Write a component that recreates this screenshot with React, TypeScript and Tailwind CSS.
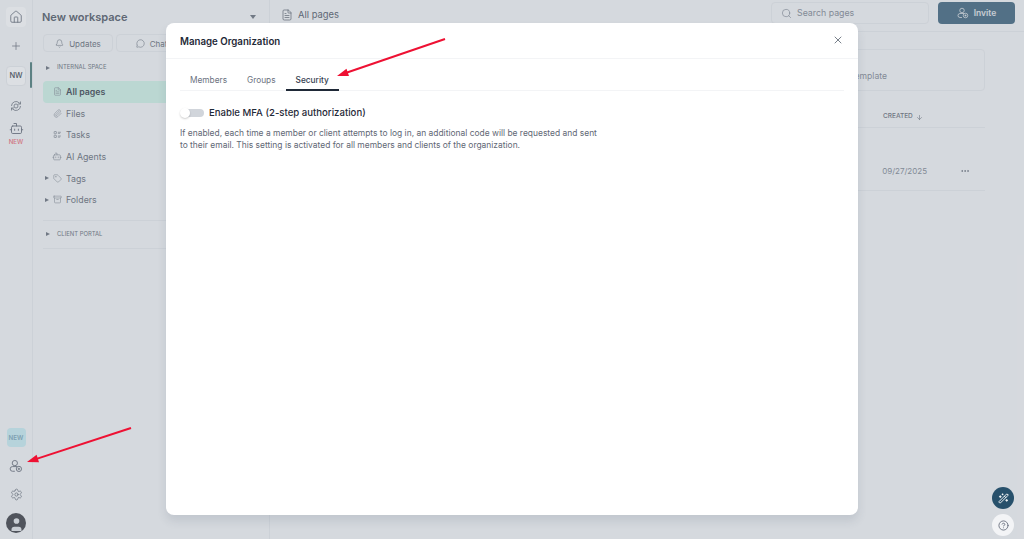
import { Bell, FileText, Home, MessageCircle, MoreHorizontal, Paperclip, Plus, Search, Tag, Archive, X, Bot, ArrowDown, Wand2, CircleHelp, User, Settings } from 'lucide-react';

function UsersPlusIcon({ className }: { className?: string }) {
  return (
    <svg viewBox="0 0 24 24" fill="none" stroke="currentColor" strokeWidth="1.6" className={className} aria-hidden>
      <circle cx="10" cy="7" r="4.5" />
      <path d="M10 21H6a3.5 3.5 0 0 1 0-8h8" />
      <circle cx="17" cy="17" r="4.5" />
      <path d="M17 15v4M15 17h4" />
    </svg>
  );
}

function SyncIcon({ className }: { className?: string }) {
  return (
    <svg viewBox="0 0 24 24" fill="none" stroke="currentColor" strokeWidth="1.6" className={className} aria-hidden>
      <circle cx="12" cy="12" r="4" />
      <path d="M3 12a9 9 0 0 1 15.5-6.2L21 8M21 12a9 9 0 0 1-15.5 6.2L3 16" />
      <path d="M21 3v5h-5M3 21v-5h5" />
    </svg>
  );
}

function TasksIcon({ className }: { className?: string }) {
  return (
    <svg viewBox="0 0 24 24" fill="none" stroke="currentColor" strokeWidth="2" className={className} aria-hidden>
      <rect x="3" y="4" width="6" height="6" rx="1" />
      <rect x="3" y="14" width="6" height="6" rx="1" />
      <path d="M13 6h8M13 9h6M13 16h8M13 19h6" />
    </svg>
  );
}

function Caret({ className }: { className?: string }) {
  return <span className={`block size-0 border-y-[2.5px] border-l-[4px] border-y-transparent border-l-[#7a808a] ${className ?? ''}`} />;
}

function NavRow({ label, icon, active, caret }: { label: string; icon: React.ReactNode; active?: boolean; caret?: boolean }) {
  return (
    <div className={`relative flex h-[21.6px] items-center rounded-l pl-[9px] text-[8.8px] ${active ? 'bg-[#d6f5ea] font-semibold text-[#4f5661]' : 'text-[#767c87]'}`}>
      {caret && <Caret className="absolute left-[2px]" />}
      <span className="flex w-[10px] justify-center text-[#8f959f]">{icon}</span>
      <span className="ml-[4px]">{label}</span>
    </div>
  );
}

function Rail() {
  return (
    <aside className="relative flex h-full w-[33px] shrink-0 flex-col items-center border-r border-[#eceef0] text-[#767c87]">
      <div className="mt-[7px] flex size-[20px] items-center justify-center rounded bg-white">
        <Home className="size-[14px]" strokeWidth={1.5} />
      </div>
      <Plus className="mt-[13px] size-[12px]" strokeWidth={1.5} />
      <div className="mt-[14px] flex size-[20px] items-center justify-center rounded border border-[#eceef0] bg-white text-[7.5px] font-medium text-[#4f5661]">
        NW
      </div>
      <span className="absolute left-[30px] top-[62px] h-[26px] w-[2px] rounded bg-[#5f8a88]" />
      <SyncIcon className="mt-[14px] size-[12px]" />
      <Bot className="mt-[9px] size-[15px]" strokeWidth={1.5} />
      <span className="mt-[1px] text-[6.2px] font-medium leading-[10px] text-[#f07a88]">NEW</span>
      <div className="mt-auto flex size-[19px] items-center justify-center rounded bg-[#d0f0f5] text-[6.2px] font-semibold text-[#8ab0c2]">NEW</div>
      <UsersPlusIcon className="mt-[12px] size-[14px]" />
      <Settings className="mt-[15px] size-[13px]" strokeWidth={1.4} />
      <div className="mb-[6px] mt-[12px] flex size-[20px] items-end justify-center overflow-hidden rounded-full bg-[#505257] text-[#e8eaed]">
        <User className="size-[17px]" fill="currentColor" strokeWidth={0} />
      </div>
    </aside>
  );
}

function Sidebar() {
  return (
    <aside className="flex h-full w-[237px] shrink-0 flex-col border-r border-[#eceef0] px-[10px]">
      <div className="flex h-[34px] items-center justify-between pr-[3px]">
        <span className="-ml-px text-[11px] font-semibold text-[#636a75]">New workspace</span>
        <span className="block size-0 border-x-[3.5px] border-t-[4px] border-x-transparent border-t-[#7a808a]" />
      </div>
      <div className="flex gap-[3px]">
        <div className="flex h-[18px] w-[70px] items-center justify-center gap-[5px] rounded border border-[#eceef0] pt-px text-[8px] text-[#767c87]">
          <Bell className="size-[9px]" strokeWidth={1.5} /> Updates
        </div>
        <div className="flex h-[18px] w-[71px] items-center justify-center gap-[5px] rounded border border-[#eceef0] pt-px text-[8px] text-[#767c87]">
          <MessageCircle className="size-[9px]" strokeWidth={1.5} /> Chat
        </div>
      </div>
      <div className="mt-[6px] flex h-[16px] items-center gap-[7px] pl-[3px] pt-[3px] text-[5.9px] text-[#767c87]">
        <Caret /> INTERNAL SPACE
      </div>
      <div className="mt-[7px] flex flex-col">
        <NavRow active label="All pages" icon={<FileText className="size-[9px]" strokeWidth={1.5} />} />
        <NavRow label="Files" icon={<Paperclip className="size-[9px]" strokeWidth={1.5} />} />
        <NavRow label="Tasks" icon={<TasksIcon className="size-[9px]" />} />
        <NavRow label="AI Agents" icon={<Bot className="size-[11px]" strokeWidth={1.5} />} />
        <NavRow caret label="Tags" icon={<Tag className="size-[9px]" strokeWidth={1.5} />} />
        <NavRow caret label="Folders" icon={<Archive className="size-[9px]" strokeWidth={1.5} />} />
      </div>
      <div className="mt-[9px] flex h-[29px] items-center gap-[7px] border-y border-[#eceef0] pl-[3px] text-[5.9px] text-[#767c87]">
        <Caret /> CLIENT PORTAL
      </div>
    </aside>
  );
}

function Main() {
  return (
    <main className="flex h-full min-w-0 flex-1 flex-col">
      <header className="flex h-[32px] items-start justify-between border-b border-[#eceef0] pl-[11px] pr-[9px] pt-[2px]">
        <div className="mt-[6px] flex items-center gap-[5px] text-[9.4px] text-[#636a75]">
          <FileText className="size-[12px]" strokeWidth={1.4} /> All pages
        </div>
        <div className="flex items-center gap-[9px]">
          <div className="flex h-[22px] w-[158px] items-center gap-[5px] rounded border border-[#eceef0] pl-[9px] text-[8.8px] text-[#8f959f]">
            <Search className="size-[11px]" strokeWidth={1.5} /> Search pages
          </div>
          <div className="flex h-[22px] w-[77px] items-center justify-center gap-[5px] rounded bg-[#53758b] text-[8.5px] font-semibold text-[#e5e8eb]">
            <UsersPlusIcon className="size-[12px]" /> Invite
          </div>
        </div>
      </header>
      <div className="flex flex-col pl-[15px] pr-[39px] pt-[17px]">
        <div className="flex h-[42px] items-center justify-end rounded border border-[#eceef0] pr-[97px] pt-[12px] text-[8.6px] text-[#8f959f]">
          Start from a template
        </div>
        <div className="flex h-[37px] items-end justify-end border-b border-[#eceef0] pb-[5px]">
          <div className="flex w-[102px] items-center gap-[3px] text-[6.5px] font-medium text-[#767c87]">
            CREATED <ArrowDown className="size-[7px]" />
          </div>
        </div>
        <div className="flex h-[63px] items-center justify-end border-b border-[#eceef0] pt-[23px] text-[8px] text-[#8f959f]">
          <span>09/27/2025</span>
          <MoreHorizontal className="ml-[33px] mr-[15px] size-[10px] text-[#767c87]" />
        </div>
      </div>
    </main>
  );
}

function Dialog() {
  return (
    <div className="flex h-[492px] w-[692px] flex-col rounded-lg bg-white shadow-[0_6px_10px_rgba(50,65,90,0.12)]">
      <div className="flex h-[36px] shrink-0 items-center justify-between border-b border-[#f3f4f6] pl-[14px] pr-[14px]">
        <h2 className="pt-[3px] text-[9.7px] font-semibold text-[#1f2937]">Manage Organization</h2>
        <X className="-mt-px size-[12px] text-[#4b5563]" strokeWidth={1.5} />
      </div>
      <div className="mx-[14px] mt-[11px] flex h-[21px] border-b border-[#f3f4f6] text-[8.3px]">
        <div className="flex items-center px-[10px] text-[#6b7280]">Members</div>
        <div className="flex items-center px-[10px] text-[#6b7280]">Groups</div>
        <div className="-mb-px flex items-center border-b-2 border-[#1f2937] px-[10px] pt-[1px] font-medium text-[#374151]">Security</div>
      </div>
      <div className="ml-[14px] mt-[15px] flex items-center">
        <div className="relative h-[8px] w-[24px] rounded-full">
          <div className="absolute left-[4px] top-0 h-[8px] w-[20px] rounded-full bg-[#d1d5db]" />
          <div className="absolute left-0 top-[-1px] size-[10px] rounded-full bg-white shadow-[0_1px_2px_rgba(0,0,0,0.2)]" />
        </div>
        <span className="ml-[5px] text-[9.6px] font-medium text-[#1f2937]">Enable MFA (2-step authorization)</span>
      </div>
      <p className="ml-[14px] mt-[8px] w-[425px] text-[8.45px] leading-[11.5px] text-[#5f6875]">
        If enabled, each time a member or client attempts to log in, an additional code will be requested and sent to their email. This setting is activated for all members and clients of the organization.
      </p>
    </div>
  );
}

function Arrow({ x1, y1, x2, y2 }: { x1: number; y1: number; x2: number; y2: number }) {
  const angle = Math.atan2(y2 - y1, x2 - x1);
  const head = (offset: number) => `${x2 - 12 * Math.cos(angle + offset)},${y2 - 12 * Math.sin(angle + offset)}`;
  return (
    <g>
      <line x1={x1} y1={y1} x2={x2 - 6 * Math.cos(angle)} y2={y2 - 6 * Math.sin(angle)} stroke="#ee1133" strokeWidth="2" />
      <polygon points={`${x2},${y2} ${head(0.33)} ${head(-0.33)}`} fill="#ee1133" />
    </g>
  );
}

export default function App() {
  return (
    <div className="relative flex h-[539px] w-[1024px] overflow-hidden bg-[#f7f8f9] font-['Inter',sans-serif]">
      <Rail />
      <Sidebar />
      <Main />
      <div className="absolute inset-0 flex items-start justify-center bg-[#525d72]/20 pt-[23px]">
        <Dialog />
      </div>
      <div className="absolute bottom-[3px] right-[10px] flex flex-col items-center gap-[5px]">
        <div className="flex size-[22px] items-center justify-center rounded-full bg-[#27506b] text-white">
          <Wand2 className="size-[11px]" />
        </div>
        <div className="flex size-[22px] items-center justify-center rounded-full bg-[#f3f4f6] text-[#6b7280]">
          <CircleHelp className="size-[11px]" />
        </div>
      </div>
      <svg className="pointer-events-none absolute inset-0" width="1024" height="539" aria-hidden>
        <Arrow x1={445} y1={39} x2={337} y2={76} />
        <Arrow x1={131} y1={428} x2={27} y2={462} />
      </svg>
    </div>
  );
}
